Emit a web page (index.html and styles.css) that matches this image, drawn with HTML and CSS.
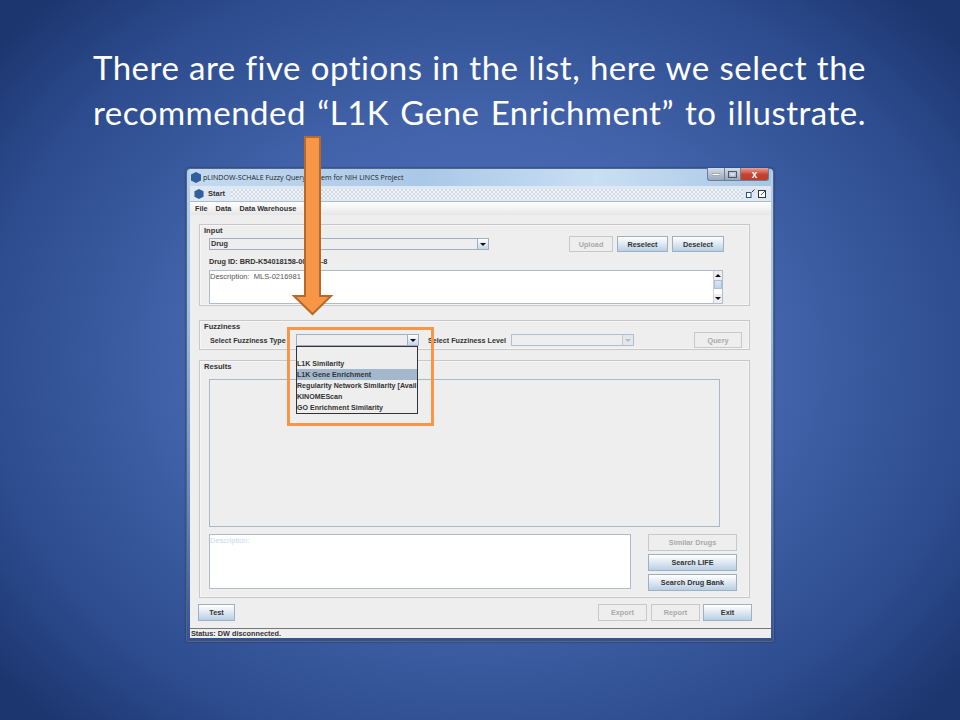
FILE: index.html
```html
<!DOCTYPE html>
<html lang="en">
<head>
    <meta charset="UTF-8">
    <title>pLINDOW-SCHALE slide</title>
    <link rel="stylesheet" href="styles.css">
</head>
<body>
    <div class="slide">
        <h1 class="headline">
            <span>There are five options in the list, here we select the</span>
            <span>recommended “L1K Gene Enrichment” to illustrate.</span>
        </h1>

        <div class="window">
            <div class="titlebar">
                <svg class="app-icon" width="10" height="11" viewBox="0 0 10 11"><polygon points="5,0 10,2.5 10,8.5 5,11 0,8.5 0,2.5" fill="#2f5f9e"/></svg>
                <span class="title-text">pLINDOW-SCHALE Fuzzy Query System for NIH LINCS Project</span>
                <div class="controls">
                    <span class="ctl ctl-min"><svg width="8" height="3"><rect width="8" height="2.4" y="0.3" fill="#fff" stroke="#667" stroke-width="0.5"/></svg></span>
                    <span class="ctl ctl-max"><svg width="9" height="7"><rect x="0.5" y="0.5" width="8" height="6" fill="none" stroke="#556" /><rect x="2.5" y="2.5" width="4" height="2" fill="#dfe8f2"/></svg></span>
                    <span class="ctl ctl-close">x</span>
                </div>
            </div>

            <div class="frame">
                <div class="tabbar">
                    <svg class="app-icon" width="10" height="10" viewBox="0 0 10 11"><polygon points="5,0 10,2.5 10,8.5 5,11 0,8.5 0,2.5" fill="#2f5f9e"/></svg>
                    <span class="tab-title">Start</span>
                    <div class="dither"></div>
                    <svg class="tab-icon" width="9" height="9" viewBox="0 0 9 9"><rect x="0.5" y="3.5" width="4.5" height="5" fill="#fff" stroke="#2f4f7f"/><path d="M6 3 L8.5 0.5" stroke="#333" fill="none"/></svg>
                    <svg class="tab-icon" width="9" height="9" viewBox="0 0 9 9"><rect x="0.5" y="1.5" width="7" height="7" fill="#fff" stroke="#333"/><path d="M3 6 L8 1" stroke="#2f4f7f" fill="none"/></svg>
                </div>
                <div class="menubar">
                    <span>File</span>
                    <span>Data</span>
                    <span>Data Warehouse</span>
                </div>

                <div class="content">
                    <section class="panel panel-input">
                        <div class="panel-title">Input</div>
                        <div class="input-row">
                            <div class="combo combo-drug">
                                <span class="combo-value">Drug</span>
                                <span class="combo-btn"><i class="caret"></i></span>
                            </div>
                            <button class="btn btn-off btn-upload">Upload</button>
                            <button class="btn btn-reselect">Reselect</button>
                            <button class="btn btn-deselect">Deselect</button>
                        </div>
                        <div class="drug-id">Drug ID: BRD-K54018158-001-01-8</div>
                        <div class="textbox textbox-drug">
                            <span class="desc-text">Description:&nbsp; MLS-0216981</span>
                            <div class="scrollbar">
                                <span class="sb-arrow"><i class="caret caret-up"></i></span>
                                <span class="sb-thumb"></span>
                                <span class="sb-track"></span>
                                <span class="sb-arrow"><i class="caret"></i></span>
                            </div>
                        </div>
                    </section>

                    <section class="panel panel-fuzzy">
                        <div class="panel-title">Fuzziness</div>
                        <div class="fuzzy-row">
                            <label class="fuzzy-label">Select Fuzziness Type</label>
                            <div class="combo combo-fuzzy">
                                <span class="combo-value"></span>
                                <span class="combo-btn"><i class="caret"></i></span>
                                <ul class="popup">
                                    <li></li>
                                    <li>L1K Similarity</li>
                                    <li class="selected">L1K Gene Enrichment</li>
                                    <li>Regularity Network Similarity [Avail</li>
                                    <li>KINOMEScan</li>
                                    <li>GO Enrichment Similarity</li>
                                </ul>
                            </div>
                            <label class="fuzzy-label level-label">Select Fuzziness Level</label>
                            <div class="combo combo-fuzzy combo-off">
                                <span class="combo-value"></span>
                                <span class="combo-btn"><i class="caret"></i></span>
                            </div>
                            <button class="btn btn-off btn-query">Query</button>
                        </div>
                    </section>

                    <section class="panel panel-results">
                        <div class="panel-title">Results</div>
                        <div class="table-box"></div>
                        <div class="results-row">
                            <div class="textbox textbox-results">
                                <span class="desc-faint">Description:</span>
                            </div>
                            <div class="side-buttons">
                                <button class="btn btn-off">Similar Drugs</button>
                                <button class="btn">Search LIFE</button>
                                <button class="btn">Search Drug Bank</button>
                            </div>
                        </div>
                    </section>

                    <div class="footer-row">
                        <button class="btn btn-test">Test</button>
                        <button class="btn btn-off btn-export">Export</button>
                        <button class="btn btn-off btn-report">Report</button>
                        <button class="btn btn-exit">Exit</button>
                    </div>
                </div>

                <div class="statusbar">Status: DW disconnected.</div>
            </div>
        </div>

        <!-- callouts drawn on the slide, over the window -->
        <div class="callout-box"></div>
        <svg class="callout-arrow" width="44" height="182" viewBox="0 0 44 182">
            <polygon points="14,1 29,1 29,160 40,160 21.5,178 3,160 14,160" fill="#f79646" stroke="#b5692a" stroke-width="2"/>
        </svg>
    </div>
</body>
</html>
```

FILE: styles.css
```css
* {
    box-sizing: border-box;
}
body {
    margin: 0;
    padding: 0;
}
.slide {
    position: relative;
    width: 960px;
    height: 720px;
    overflow: hidden;
    padding-top: 45px;
    background: radial-gradient(ellipse 620px 500px at 50% 50%, #5071b9 0%, #4465ad 45%, #2d4c8e 80%, #1c3670 100%);
    font-family: "Liberation Sans", Arial, sans-serif;
}
.headline {
    margin: 0 0 33px 93px;
    width: 773px;
    font-family: Lato, "Open Sans", sans-serif;
    font-size: 33px;
    font-weight: 400;
    font-variant-ligatures: none;
    letter-spacing: 0.5px;
    line-height: 45px;
    color: #fff;
}
.headline span {
    display: block;
    text-align: justify;
    text-align-last: justify;
}

/* window */
.window {
    margin-left: 186px;
    width: 588px;
    height: 474px;
    padding: 0 2px 3px 3px;
    border: 1px solid #55657f;
    border-radius: 4px 4px 2px 2px;
    background: linear-gradient(#b7d0ea, #9fbfe0 30%, #5f80b5 75%, #34528f);
    box-shadow: 0 0 2px #1a2c55;
}
.titlebar {
    display: flex;
    align-items: center;
    height: 17px;
    padding: 0 1px 1px 1px;
    background: linear-gradient(90deg, #c5daf0, #a9c8e8 40%, #c9dff3 70%, #a8c6e4);
}
.title-text {
    margin-left: 2px;
    font-family: "Open Sans", sans-serif;
    font-size: 7.1px;
    color: #222;
}
.controls {
    display: flex;
    align-self: flex-start;
    margin: -1px 1px 0 auto;
    height: 13px;
}
.ctl {
    display: flex;
    align-items: center;
    justify-content: center;
    height: 13px;
    border: 1px solid #6d7f95;
    border-top: 0;
    background: linear-gradient(#d3dde8, #98a9bc);
}
.ctl-min, .ctl-max {
    width: 17px;
    border-right: 0;
}
.ctl-max {
    width: 16px;
}
.ctl-min {
    border-radius: 0 0 0 3px;
}
.ctl-close {
    width: 29px;
    border-radius: 0 0 3px 0;
    background: linear-gradient(#e8a095, #c8402e 55%, #b8402e);
    color: #fff;
    font-size: 10px;
    font-weight: bold;
    line-height: 11px;
}
.frame {
    height: 452px;
    border-bottom: 1px solid #444;
    background: #eeeeee;
}
.tabbar {
    display: flex;
    align-items: center;
    gap: 3px;
    height: 16px;
    padding: 0 4px;
    background: #dfe8f2;
    border-bottom: 1px solid #a9bdd2;
}
.tab-title {
    margin: 0 3px 0 1px;
    font-size: 7.5px;
    font-weight: bold;
    color: #333;
}
.dither {
    flex: 1;
    height: 10px;
    background: repeating-conic-gradient(#d2dbe5 0 25%, #f1f4f7 0 50%) 0 0 / 4px 4px;
}
.tab-icon {
    flex: none;
}
.menubar {
    display: flex;
    gap: 8px;
    height: 13px;
    padding-left: 5px;
    align-items: center;
    background: linear-gradient(#ffffff, #e6e6e6);
    font-size: 7.3px;
    font-weight: bold;
    color: #333;
}
.content {
    height: 413px;
    padding: 9px 21px 0 9px;
}

/* titled panels */
.panel {
    border: 1px solid #c8c8c8;
    box-shadow: inset 0 0 0 1px #f6f6f6;
}
.panel-title {
    height: 10px;
    padding-left: 4px;
    font-size: 7.6px;
    font-weight: bold;
    line-height: 10px;
    color: #333;
}
.panel-input {
    height: 82px;
    padding: 1px 25px 0 0;
}
.panel-fuzzy {
    height: 30px;
    margin-top: 14px;
    padding-right: 7px;
}
.panel-fuzzy .panel-title, .panel-results .panel-title {
    line-height: 12px;
}
.panel-results {
    height: 238px;
    margin-top: 10px;
    padding-left: 9px;
}
.panel-results .panel-title {
    margin-left: -9px;
}
.input-row {
    display: flex;
    align-items: center;
    gap: 4px;
    height: 16px;
    margin-left: 9px;
}

/* combos */
.combo {
    position: relative;
    display: flex;
    height: 12px;
    border: 1px solid #9fb0c3;
    background: #eeeeee;
    font-size: 7.3px;
    font-weight: bold;
    color: #333;
}
.combo-drug {
    width: 280px;
    margin-right: 76px;
}
.combo-fuzzy {
    width: 123px;
    flex: none;
}
.combo-value {
    flex: 1;
    padding-left: 1px;
    line-height: 10px;
}
.combo-btn {
    display: flex;
    align-items: center;
    justify-content: center;
    width: 11px;
    border-left: 1px solid #9fb0c3;
    background: linear-gradient(#ffffff, #c6d6e6);
}
.caret {
    display: block;
    border-left: 3px solid transparent;
    border-right: 3px solid transparent;
    border-top: 3px solid #111;
}
.caret-up {
    border-top: 0;
    border-bottom: 3px solid #111;
}
.combo-off {
    border-color: #a9c0d8;
}
.combo-off .combo-btn {
    background: #e6e6e6;
    border-left-color: #c8c8c8;
}
.combo-off .caret {
    border-top-color: #a9c0d8;
}
.popup {
    position: absolute;
    top: 11px;
    left: -1px;
    z-index: 2;
    width: 122px;
    height: 68px;
    margin: 0;
    padding: 0;
    list-style: none;
    border: 1px solid #333;
    background: #eeeeee;
}
.popup li {
    height: 11px;
    font-size: 7.1px;
    line-height: 12px;
    white-space: nowrap;
}
.popup .selected {
    background: #a3b8cc;
}

/* buttons */
.btn {
    height: 16px;
    padding: 0;
    border: 1px solid #9fb0c3;
    background: linear-gradient(#ffffff, #dde8f2 50%, #b8cfe5);
    font-family: "Liberation Sans", Arial, sans-serif;
    font-size: 7.3px;
    font-weight: bold;
    color: #333;
}
.btn-off {
    border-color: #c8c8c8;
    background: #eeeeee;
    color: #aaaaaa;
}
.btn-upload {
    width: 44px;
}
.btn-reselect {
    width: 51px;
}
.btn-deselect {
    width: 52px;
}
.btn-query {
    width: 48px;
    margin-left: auto;
}

.drug-id {
    height: 10px;
    margin: 5px 0 0 9px;
    font-size: 7.3px;
    font-weight: bold;
    line-height: 10px;
    color: #333;
}
.textbox {
    display: flex;
    border: 1px solid #aebccb;
    background: #fff;
    font-size: 7.5px;
}
.textbox-drug {
    height: 34px;
    margin: 3px 1px 0 9px;
    justify-content: space-between;
}
.desc-text {
    padding-top: 1px;
    color: #555;
}
.scrollbar {
    display: flex;
    flex-direction: column;
    width: 9px;
    border-left: 1px solid #c8d3df;
}
.sb-arrow {
    display: flex;
    align-items: center;
    justify-content: center;
    height: 9px;
    background: #eeeeee;
}
.sb-thumb {
    height: 9px;
    background: linear-gradient(#dbe6f1, #c0d3e6);
    border: 1px solid #a9c0d8;
}
.sb-track {
    flex: 1;
}
.fuzzy-row {
    display: flex;
    align-items: center;
    height: 16px;
    margin-top: 1px;
    padding-left: 10px;
}
.fuzzy-label {
    flex: none;
    width: 86px;
    font-size: 7.2px;
    font-weight: bold;
    color: #333;
}
.level-label {
    width: 83px;
    margin-left: 9px;
}
.table-box {
    width: 511px;
    height: 148px;
    margin-top: 8px;
    border: 1px solid #a9b7c6;
}
.results-row {
    display: flex;
    margin-top: 7px;
}
.textbox-results {
    width: 422px;
    height: 55px;
    padding-top: 1px;
}
.desc-faint {
    color: #c9d9ec;
}
.side-buttons {
    display: flex;
    flex-direction: column;
    gap: 3px;
    width: 89px;
    margin-left: 17px;
}
.side-buttons .btn {
    height: 17px;
}
.footer-row {
    display: flex;
    align-items: center;
    height: 17px;
    margin: 6px -2px 0 -1px;
}
.btn-test {
    width: 37px;
    height: 17px;
    margin-right: auto;
}
.btn-export, .btn-report, .btn-exit {
    width: 49px;
    height: 17px;
}
.btn-report {
    margin: 0 3px 0 4px;
}
.statusbar {
    height: 10px;
    padding-left: 1px;
    border-top: 1px solid #777;
    font-size: 7.3px;
    font-weight: bold;
    line-height: 9px;
    color: #333;
    background: #eeeeee;
}

/* slide callouts */
.callout-box {
    position: absolute;
    left: 287px;
    top: 327px;
    width: 147px;
    height: 99px;
    border: 3px solid #f79646;
}
.callout-arrow {
    position: absolute;
    left: 291px;
    top: 136px;
}
```
